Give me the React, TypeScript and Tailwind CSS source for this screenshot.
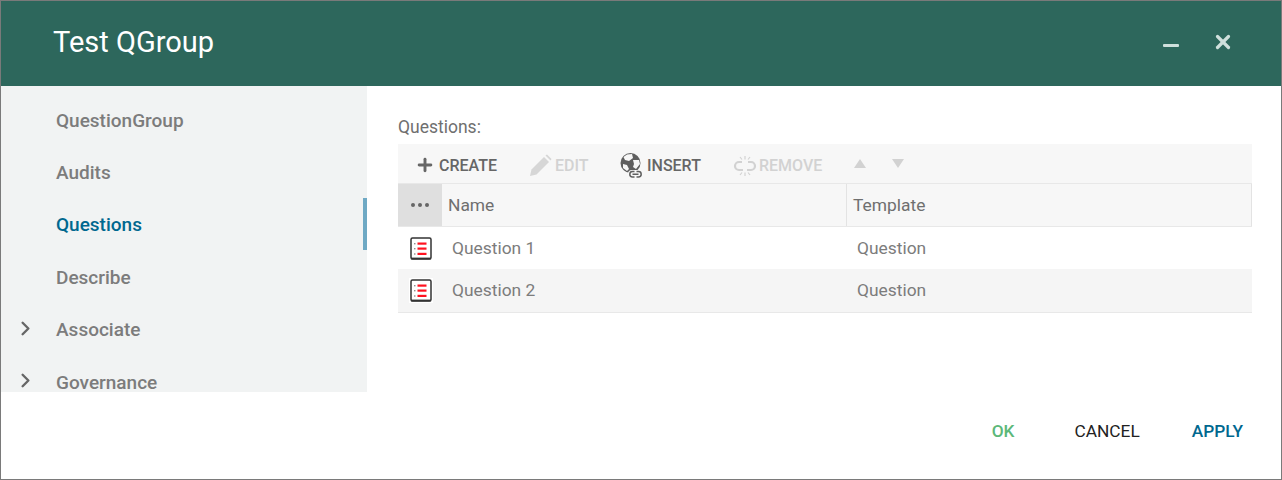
import React from 'react';
import { ChevronRight, Plus, X } from 'lucide-react';

const navItems = [
  { label: 'QuestionGroup' },
  { label: 'Audits' },
  { label: 'Questions', active: true },
  { label: 'Describe' },
  { label: 'Associate', expandable: true },
  { label: 'Governance', expandable: true },
];

const rows = ['Question 1', 'Question 2'];

// Globe with a small chain link under it
const GlobeLinkIcon = () => (
  <svg width="24" height="26" viewBox="0 0 24 26" className="shrink-0">
    <circle cx="10.5" cy="10" r="10" fill="#5f5f5f" />
    <path d="M7 1.5 L12 1 L13 5 L9 8 L5 7 L3.5 4 Z M13 7 L19 7 L20 11 L16 16 L13 14 L14 11 Z M3 11 L7 12 L9 16 L7 18 L3 15 Z" fill="#f7f7f7" />
    <rect x="8" y="17" width="15" height="8.5" rx="4" fill="#f7f7f7" />
    <path d="M14.5 18.5 H12.5 a2.7 2.7 0 0 0 0 5.4 H14.5 M16.5 18.5 H18.5 a2.7 2.7 0 0 1 0 5.4 H16.5 M12.5 21.2 H18.5" fill="none" stroke="#5f5f5f" strokeWidth="1.5" />
  </svg>
);

// Solid pencil, disabled look
const PencilIcon = () => (
  <svg width="23" height="23" viewBox="0 0 23 23" className="shrink-0">
    <path d="M1 22 L2.5 15.5 L15 3 L20 8 L7.5 20.5 Z" fill="#d6d6d6" />
    <path d="M16.5 1.5 L18 0.5 L22.5 5 L21.5 6.5 Z" fill="#d6d6d6" />
  </svg>
);

// Broken chain link, disabled look
const UnlinkIcon = () => (
  <svg width="26" height="22" viewBox="0 0 26 22" fill="none" stroke="#d2d2d2" strokeWidth="2.2" className="shrink-0">
    <path d="M10 7 H7 a4 4 0 0 0 0 8 H11 M16 7 H19 a4 4 0 0 1 0 8 H15" />
    <path d="M13 1 V4.5 M8 2 L10 4.5 M18 2 L16 4.5 M13 17.5 V21 M8 20 L10 17.5 M18 20 L16 17.5" strokeWidth="1.2" />
  </svg>
);

const QuestionIcon = () => (
  <svg width="22" height="23" viewBox="0 0 22 23" className="shrink-0">
    <rect x="1" y="1" width="20" height="21" rx="1.5" fill="#fff" stroke="#333" strokeWidth="1.5" />
    <path d="M1 21.5 H21" stroke="#333" strokeWidth="1.8" />
    <rect x="7.5" y="5.5" width="9" height="2.2" fill="#ff1220" />
    <rect x="7.5" y="10.5" width="9" height="2.2" fill="#ff1220" />
    <rect x="7.5" y="15.8" width="9" height="2.2" fill="#ff1220" />
    <rect x="4.2" y="6" width="1.2" height="1.4" fill="#777" />
    <rect x="4.2" y="11" width="1.2" height="1.4" fill="#777" />
    <rect x="4.2" y="16.3" width="1.2" height="1.4" fill="#777" />
  </svg>
);

const App: React.FC = () => {
  return (
    <div className="w-[1282px] h-[480px] flex flex-col overflow-hidden bg-white border border-[#7a7a7a] font-['Roboto',sans-serif]">
      {/* Title bar */}
      <div className="h-[85px] shrink-0 flex items-center justify-between bg-[#2d675c] pl-[52px] pr-[47px]">
        <h1 className="text-[29px] text-white mb-[2px]">Test QGroup</h1>
        <div className="flex items-center gap-[33px] text-[#cfe0dc] mb-[4px]">
          <div className="w-[16px] h-[3px] bg-[#cfe0dc] rounded-[1px] mt-[7px]" />
          <X size={22} strokeWidth={3.5} />
        </div>
      </div>

      <div className="flex h-[306px] shrink-0">
        {/* Side nav */}
        <div className="w-[366px] shrink-0 bg-[#f1f3f3] overflow-hidden pt-[7px]">
          {navItems.map((item) => (
            <div key={item.label} className="relative h-[52.4px] flex items-center pl-[55px]">
              {item.expandable && (
                <ChevronRight size={23} strokeWidth={2.5} className="absolute left-[13px] top-[14px] text-[#666]" />
              )}
              <span className={`text-[19px] font-medium mt-[3.4px] ${item.active ? 'text-[#00688f]' : 'text-[#7c7c7c]'}`}>
                {item.label}
              </span>
              {item.active && <div className="absolute right-0 top-0 h-full w-[4px] bg-[#6fa9c4]" />}
            </div>
          ))}
        </div>

        {/* Questions panel */}
        <div className="flex-1 pl-[31px] pr-[29px] pt-[31px]">
          <div className="text-[17.5px] text-[#6f6f6f] leading-[20px] mb-[7px]">Questions:</div>

          <div className="h-[39px] flex items-center bg-[#f7f7f7] pl-[17px] pt-[4px] text-[16px] font-medium">
            <div className="flex items-center gap-[4px] text-[#666] w-[114px]">
              <Plus size={20} strokeWidth={3.5} className="-mt-[2px]" />
              <span>CREATE</span>
            </div>
            <div className="flex items-center gap-[3px] text-[#d2d2d2] w-[91px]">
              <PencilIcon />
              <span>EDIT</span>
            </div>
            <div className="flex items-center gap-[3px] text-[#666] w-[112px]">
              <GlobeLinkIcon />
              <span>INSERT</span>
            </div>
            <div className="flex items-center gap-[1px] text-[#d2d2d2] w-[122px]">
              <UnlinkIcon />
              <span>REMOVE</span>
            </div>
            <div className="flex items-center gap-[26px] -mt-[5px]">
              <div className="w-0 h-0 border-x-[6px] border-x-transparent border-b-[9px] border-b-[#d2d2d2]" />
              <div className="w-0 h-0 border-x-[6px] border-x-transparent border-t-[9px] border-t-[#d2d2d2]" />
            </div>
          </div>

          {/* Grid */}
          <div className="h-[44px] flex bg-[#f7f7f7] border-y border-[#e8e8e8] text-[17.4px] text-[#6f6f6f]">
            <div className="w-[44px] shrink-0 bg-[#dfdfdf] flex items-center justify-center gap-[3px]">
              <span className="w-[4px] h-[4px] rounded-full bg-[#666]" />
              <span className="w-[4px] h-[4px] rounded-full bg-[#666]" />
              <span className="w-[4px] h-[4px] rounded-full bg-[#666]" />
            </div>
            <div className="w-[405px] shrink-0 flex items-center pl-[6px] border-r border-[#e3e3e3]">Name</div>
            <div className="flex-1 flex items-center pl-[6px] border-r border-[#e3e3e3]">Template</div>
          </div>
          {rows.map((name, i) => (
            <div
              key={name}
              className={`flex items-center text-[17.4px] text-[#7c7c7c] ${i % 2 === 1 ? 'h-[44px] bg-[#f5f5f5] border-b border-[#e8e8e8]' : 'h-[42px] pt-[1px] bg-white'}`}
            >
              <div className="w-[44px] shrink-0 flex justify-center pl-[2px]">
                <div className="bg-white p-[1px]"><QuestionIcon /></div>
              </div>
              <div className="w-[415px] shrink-0 pl-[10px]">{name}</div>
              <div>Question</div>
            </div>
          ))}
        </div>
      </div>

      {/* Footer */}
      <div className="flex-1 flex items-center justify-end pr-[38px] pb-[8px] text-[17.3px]">
        <span className="font-medium text-[#5cb879]">OK</span>
        <span className="ml-[60px] text-[#222]">CANCEL</span>
        <span className="ml-[52px] font-medium text-[#00688f]">APPLY</span>
      </div>
    </div>
  );
};

export default App;
